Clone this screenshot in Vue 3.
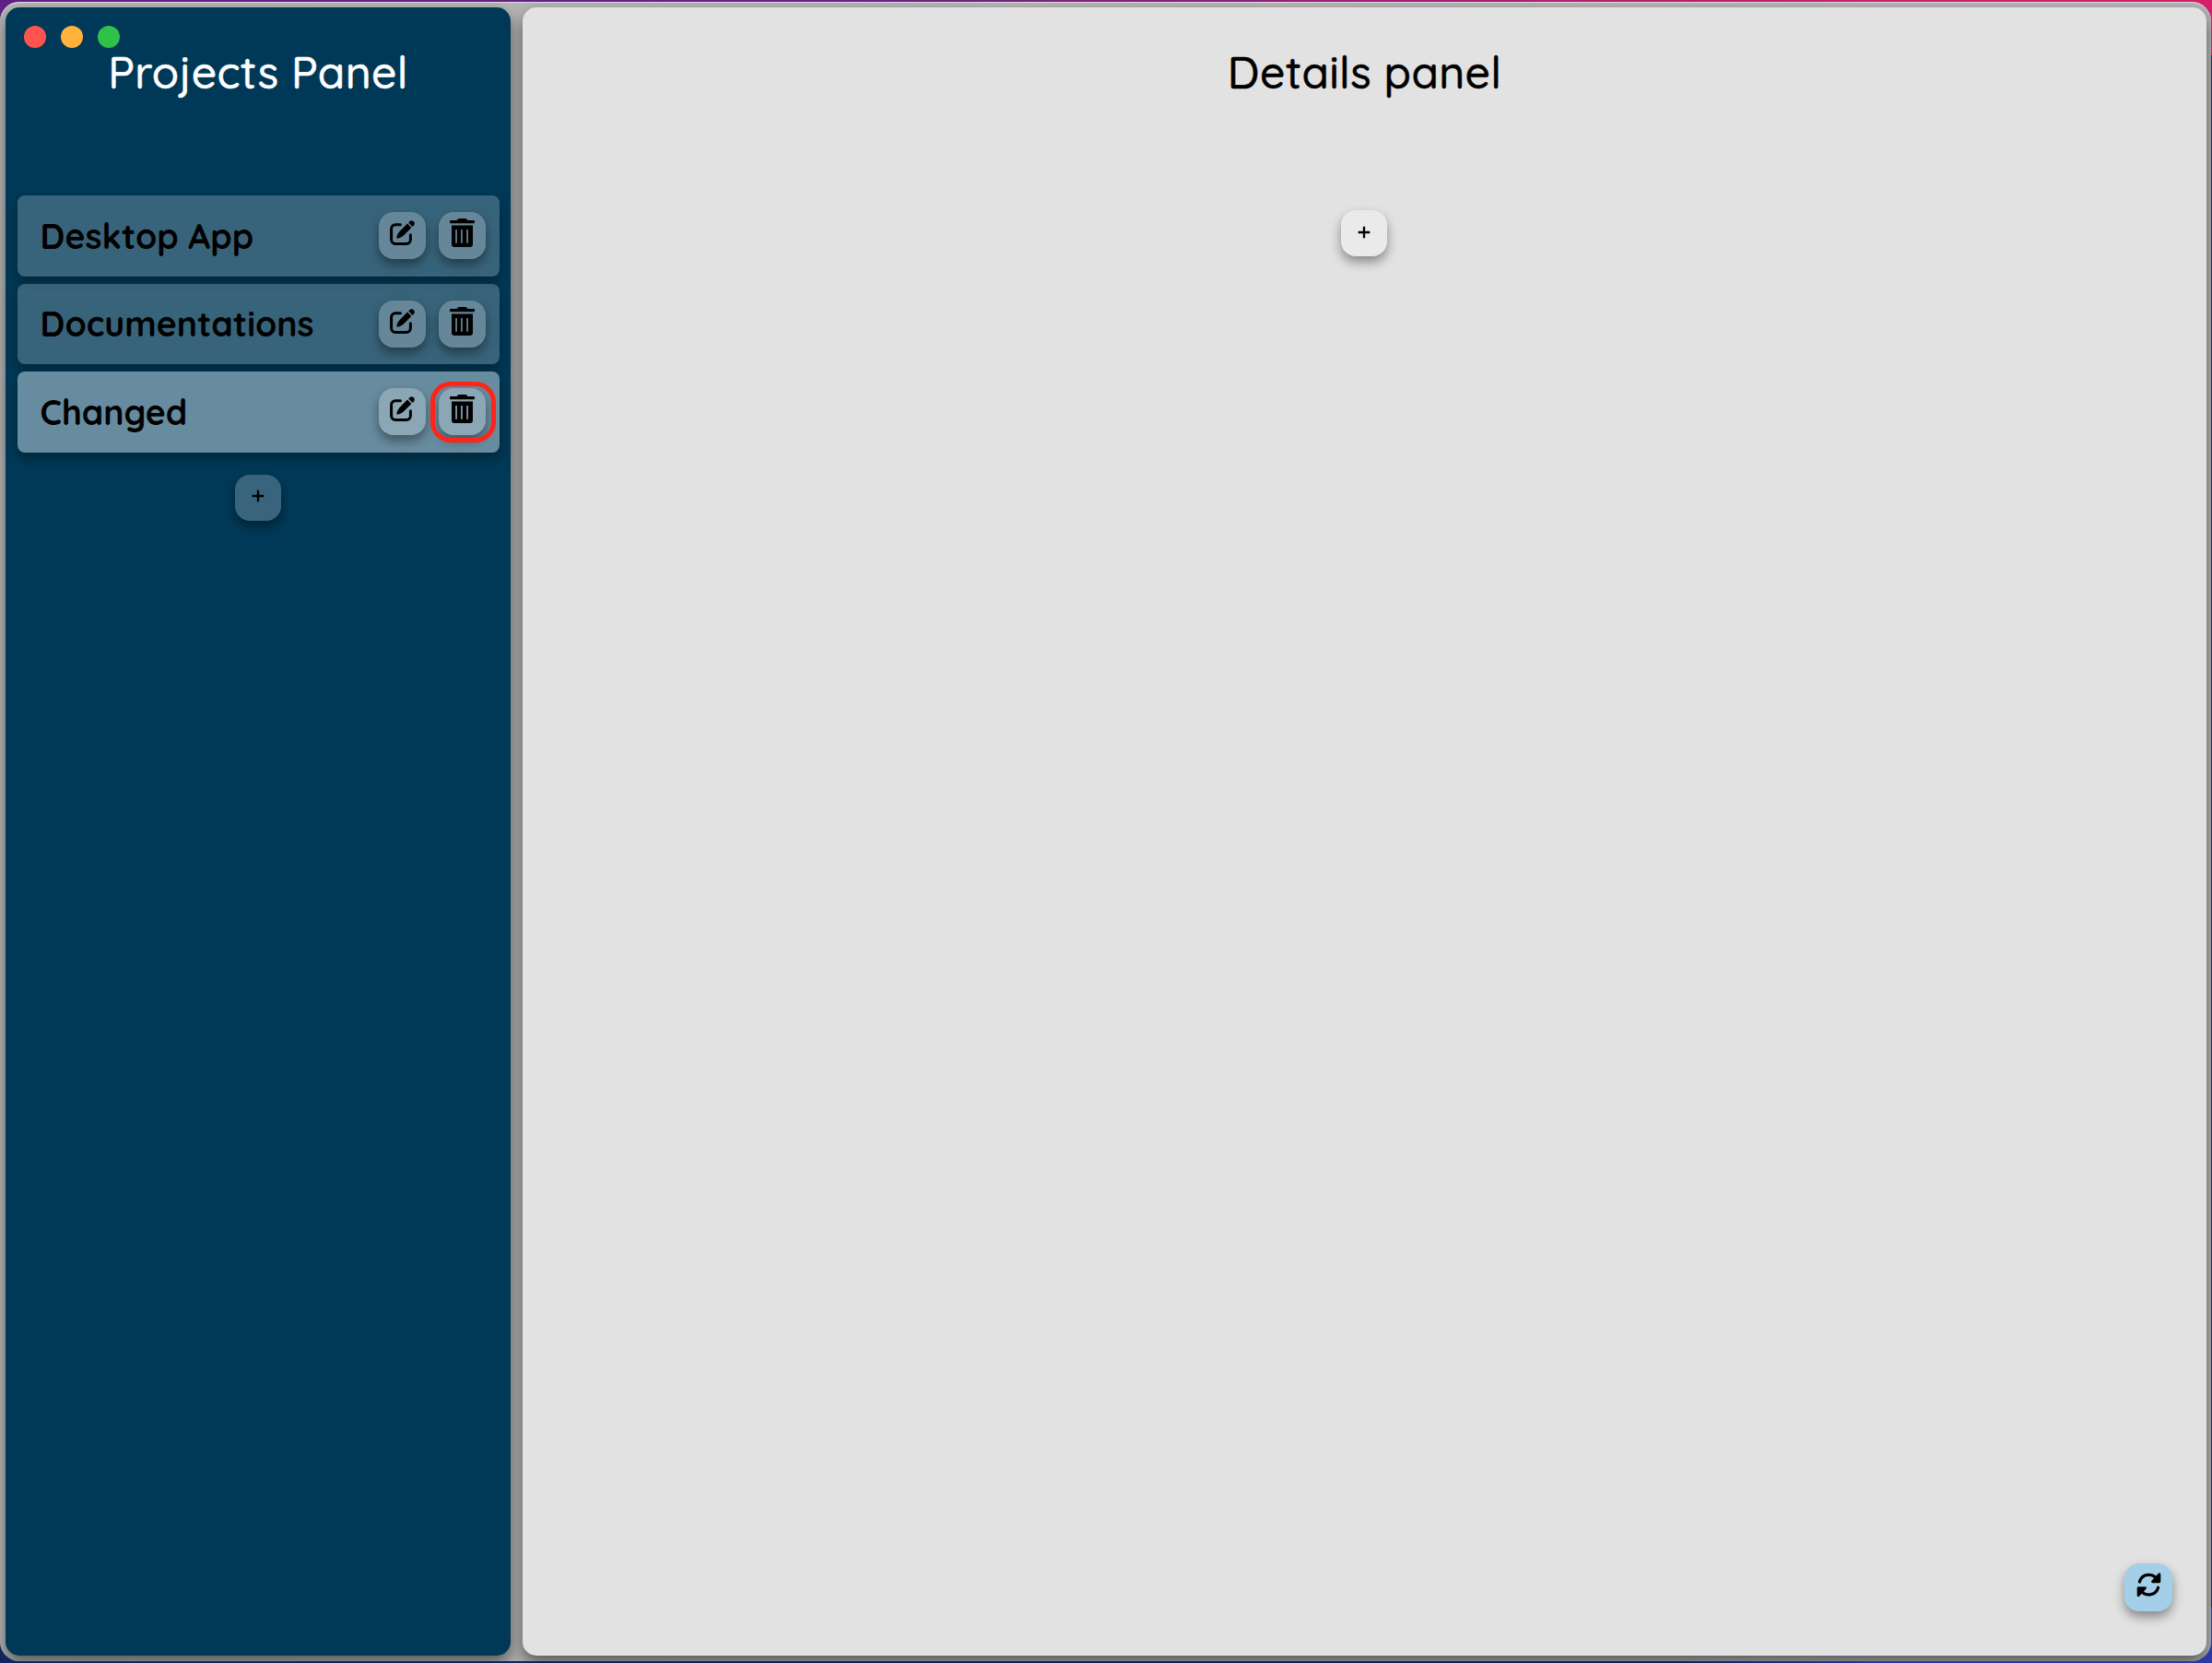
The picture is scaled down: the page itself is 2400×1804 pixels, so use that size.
<script setup>
const projects = [
  { name: 'Desktop App', selected: false },
  { name: 'Documentations', selected: false },
  { name: 'Changed', selected: true },
]
</script>

<template>
  <div class="backdrop">
    <div class="window">
      <aside class="panel projects">
        <div class="lights">
          <span class="light close"></span>
          <span class="light minimise"></span>
          <span class="light zoom"></span>
        </div>
        <h1 class="title">Projects Panel</h1>
        <ul class="list">
          <li v-for="p in projects" :key="p.name" class="item" :class="{ selected: p.selected }">
            <span class="name">{{ p.name }}</span>
            <div class="actions">
              <button class="btn" aria-label="Edit">
                <svg class="edit" viewBox="0 0 27 27">
                  <path d="M11.5 4.7H6A4.4 4.4 0 0 0 1.6 9.1V21A4.4 4.4 0 0 0 6 25.4H18A4.4 4.4 0 0 0 22.4 21V15.7" fill="none" stroke="#000" stroke-width="3" stroke-linecap="round" />
                  <path d="M19 3.6L23.4 8L14.6 16.8Q11.5 19.6 7.3 19.8Q7.4 15.4 10.2 12.4Z" />
                  <path d="M20.2 2.5L21.6 1.1Q23.5-.7 25.7 1.3Q27.8 3.5 26 5.4L24.5 6.9Z" />
                </svg>
              </button>
              <button class="btn" aria-label="Delete">
                <svg class="trash" viewBox="0 0 27 31">
                  <path d="M1 2H7.5Q8.8 0 10.3 0H16.8Q18.3 0 19.5 2H26Q27 2 27 3V4Q27 5.2 26 5.2H1Q0 5.2 0 4V3Q0 2 1 2Z" />
                  <path fill-rule="evenodd" d="M2 7.6H25V28Q25 31 22 31H5Q2 31 2 28ZM6.2 12V26.7H7.9V12ZM12.1 12V26.7H13.8V12ZM18.2 12V26.7H19.9V12Z" />
                </svg>
                <span v-if="p.selected" class="ring"></span>
              </button>
            </div>
          </li>
        </ul>
        <button class="btn add" aria-label="Add project">
          <svg class="plus" viewBox="0 0 14 14"><path d="M7 .7V13.3M.7 7H13.3" stroke="#000" stroke-width="2.3" /></svg>
        </button>
      </aside>
      <main class="panel details">
        <h1 class="title">Details panel</h1>
        <button class="btn add" aria-label="Add detail">
          <svg class="plus" viewBox="0 0 14 14"><path d="M7 .7V13.3M.7 7H13.3" stroke="#000" stroke-width="2.3" /></svg>
        </button>
        <button class="btn refresh" aria-label="Refresh">
          <svg viewBox="0 0 27 27">
            <path d="M3.4 10A10.4 10.4 0 0 1 22.8 8.2M23.6 16.2A10.4 10.4 0 0 1 4.2 18" fill="none" stroke="#000" stroke-width="3.2" stroke-linecap="round" />
            <path d="M24.9 1.8V9.8H17.5ZM2.1 24.6V16.6H9.5Z" stroke="#000" stroke-width="2.8" stroke-linejoin="round" />
          </svg>
        </button>
      </main>
    </div>
  </div>
</template>

<style>
body {
  background: #16235c;
}
</style>

<style scoped>
.backdrop {
  box-sizing: border-box;
  width: 2400px;
  height: 1804px;
  padding: 2px 1px 2px 0;
  overflow: hidden;
  background:
    linear-gradient(90deg, #5e2085, #6a2086 40%, #cc1f68 85%, #d3206a) top / 100% 60px no-repeat,
    linear-gradient(90deg, #13255f, #101f57 75%, #2b36a0 85%, #2c38a3) bottom / 100% 60px no-repeat,
    #16235c;
  font-family: Quicksand, Lato, sans-serif;
}
.window {
  box-sizing: border-box;
  height: 1800px;
  display: flex;
  gap: 13px;
  padding: 6px 5px 6px 6px;
  border-radius: 21px;
  overflow: hidden;
  background: #b5b5b5;
  box-shadow: inset 0 1px 0 #dedede;
}
.panel {
  position: relative;
  box-sizing: border-box;
  height: 1788px;
  border-radius: 15px;
  display: flex;
  flex-direction: column;
  align-items: center;
  box-shadow: 0 8px 16px rgba(0, 0, 0, 0.5);
}
.projects {
  width: 548px;
  flex: none;
  background: #003957;
  color: #fff;
}
.details {
  flex: 1;
  background: #e2e2e2;
  color: #000;
}
.lights {
  position: absolute;
  left: 20px;
  top: 20px;
  display: flex;
  gap: 16px;
}
.light {
  width: 24px;
  height: 24px;
  border-radius: 50%;
}
.close { background: #ff534f; }
.minimise { background: #ffb23c; }
.zoom { background: #30c148; }
.title {
  margin: 0;
  height: 204px;
  padding-top: 40px;
  box-sizing: border-box;
  font-size: 48px;
  line-height: 60px;
  font-weight: 500;
  -webkit-text-stroke: 0.5px currentColor;
  letter-spacing: 0.3px;
  white-space: nowrap;
}
.list {
  list-style: none;
  margin: 0;
  padding: 0;
  width: 523px;
  display: flex;
  flex-direction: column;
  gap: 8px;
}
.item {
  box-sizing: border-box;
  height: 87.6px;
  padding: 0 15px 0 25px;
  display: flex;
  align-items: center;
  justify-content: space-between;
  border-radius: 8px;
  background: rgba(255, 255, 255, 0.22);
  box-shadow: 0 6px 14px rgba(0, 0, 0, 0.35);
  color: #000;
}
.item.selected {
  background: #688c9f;
}
.name {
  font-size: 37.4px;
  line-height: 46px;
  font-weight: 700;
  white-space: nowrap;
}
.actions {
  display: flex;
  gap: 14px;
}
.btn {
  position: relative;
  width: 51px;
  height: 51px;
  padding: 0;
  border: 0;
  border-radius: 16px;
  display: flex;
  align-items: center;
  justify-content: center;
  background: rgba(255, 255, 255, 0.23);
  box-shadow: 0 6px 12px rgba(0, 0, 0, 0.4);
}
.btn svg {
  display: block;
  overflow: visible;
}
.edit {
  width: 27px;
  height: 27px;
  margin-top: -6px;
}
.trash {
  width: 27px;
  height: 31px;
  margin-top: -6px;
}
.ring {
  position: absolute;
  box-sizing: border-box;
  left: -9px;
  top: -7px;
  width: 71px;
  height: 66px;
  border: 5px solid #ff2418;
  border-radius: 22px;
}
.add {
  width: 50px;
  height: 50px;
}
.projects .add {
  margin-top: 24px;
  background: #38647e;
}
.details .add {
  margin-top: 16px;
  margin-right: 1px;
  background: #eaeaea;
}
.plus {
  width: 14px;
  height: 14px;
  margin-top: -3px;
}
.refresh {
  width: 52px;
  height: 52px;
  margin: auto 37px 48px auto;
  background: #a3d0e8;
}
.refresh svg {
  width: 27px;
  height: 27px;
  margin-top: -6px;
}
</style>
